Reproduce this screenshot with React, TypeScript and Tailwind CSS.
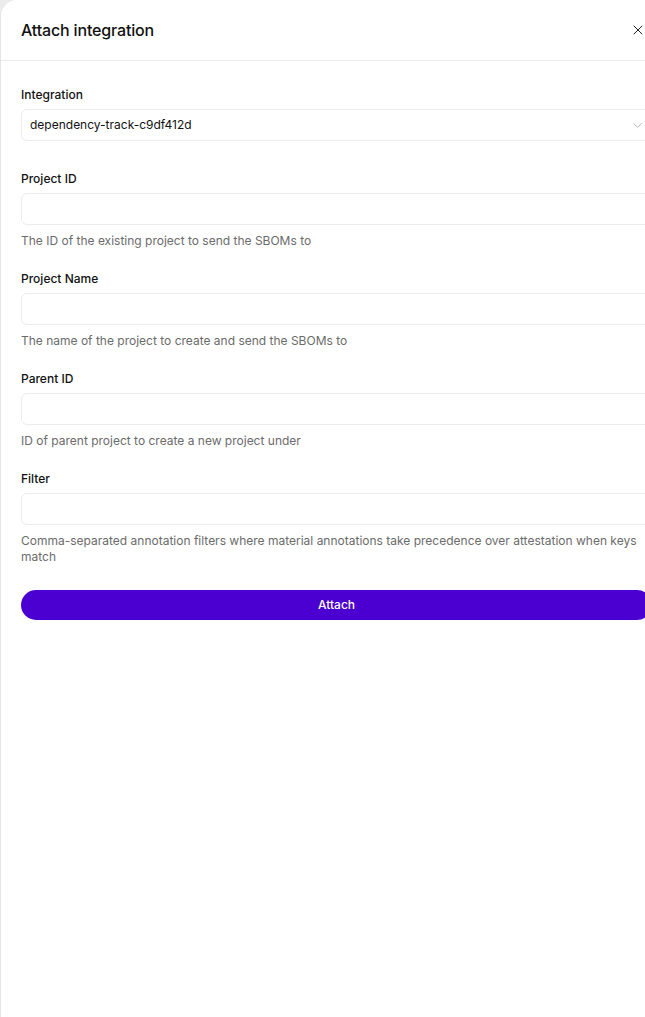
import { ChevronDown, X } from "lucide-react";

const fields = [
  { label: "Project ID", help: "The ID of the existing project to send the SBOMs to" },
  { label: "Project Name", help: "The name of the project to create and send the SBOMs to" },
  { label: "Parent ID", help: "ID of parent project to create a new project under" },
  {
    label: "Filter",
    help: "Comma-separated annotation filters where material annotations take precedence over attestation when keys match",
  },
];

const App = () => {
  return (
    <div className="h-[1017px] w-full overflow-hidden bg-[#ececec] font-['Inter',sans-serif] text-[#111]">
      <div className="flex h-full w-[672px] flex-col rounded-tl-2xl border-l border-[#e4e4e4] bg-white">
        {/* Header */}
        <div className="flex h-[61px] items-center justify-between border-b border-[#ebebeb] pl-[20px] pr-[26px]">
          <h2 className="text-[16px] font-medium tracking-[-0.01em]">Attach integration</h2>
          <X className="h-4 w-4 text-[#222]" strokeWidth={1.5} />
        </div>

        {/* Form */}
        <div className="flex flex-col px-[20px] pt-[26px]">
          <div className="flex flex-col">
            <label className="text-[12px] font-medium leading-4">Integration</label>
            <div className="mt-[6px] flex h-8 items-center justify-between rounded-md border border-[#ececec] pl-[8px] pr-[6px]">
              <span className="text-[12px]">dependency-track-c9df412d</span>
              <ChevronDown className="h-[15px] w-[15px] text-[#aaa]" strokeWidth={1.5} />
            </div>
          </div>

          {fields.map((f, i) => (
            <div key={f.label} className={`flex flex-col ${i === 0 ? "mt-[30px]" : "mt-[22px]"}`}>
              <label className="text-[12px] font-medium leading-4">{f.label}</label>
              <input className="mt-[6px] h-8 rounded-md border border-[#ececec] px-[8px] text-[12px] outline-none" />
              <p className="mt-[8px] text-[12px] leading-4 text-[#6b6b6b]">{f.help}</p>
            </div>
          ))}

          <button className="mt-[25px] h-[30px] rounded-full bg-[#4b00d1] text-[12px] font-medium text-white">
            Attach
          </button>
        </div>
      </div>
    </div>
  );
};

export default App;
